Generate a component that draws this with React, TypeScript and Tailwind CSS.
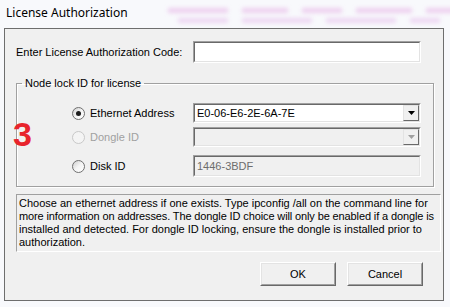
import React from "react";

function Radio({ checked, disabled }: { checked?: boolean; disabled?: boolean }) {
  return (
    <span
      className={
        disabled
          ? "w-[13px] h-[13px] shrink-0 rounded-full border border-[#c8c8c8] bg-[#f4f4f4] flex items-center justify-center"
          : "w-[13px] h-[13px] shrink-0 rounded-full border border-[#6f6f6f] bg-gradient-to-br from-[#cfcfcf] via-[#f4f4f4] to-white flex items-center justify-center"
      }
    >
      {checked && <span className="w-[5px] h-[5px] rounded-full bg-[#1c1c1c]" />}
    </span>
  );
}

function Sunken({
  children,
  className,
  inner,
}: {
  children?: React.ReactNode;
  className: string;
  inner: string;
}) {
  return (
    <div className={"border border-t-[#a0a0a0] border-l-[#a0a0a0] border-b-white border-r-white " + className}>
      <div className={"w-full h-full border border-t-[#696969] border-l-[#696969] border-b-[#e3e3e3] border-r-[#e3e3e3] flex items-center " + inner}>
        {children}
      </div>
    </div>
  );
}

function DropButton({ disabled }: { disabled?: boolean }) {
  return (
    <div className="ml-auto h-full w-[16px] bg-[#f0f0f0] border border-t-[#e3e3e3] border-l-[#e3e3e3] border-b-[#696969] border-r-[#696969] flex items-center justify-center">
      <svg width="7" height="4" viewBox="0 0 7 4">
        <path d="M0 0H7L3.5 4Z" fill={disabled ? "#a0a0a0" : "#000"} />
      </svg>
    </div>
  );
}

function Button({ label }: { label: string }) {
  return (
    <div className="w-[76px] h-[24px] border border-t-white border-l-white border-b-[#696969] border-r-[#696969]">
      <div className="w-full h-full border border-t-[#e3e3e3] border-l-[#e3e3e3] border-b-[#a0a0a0] border-r-[#a0a0a0] bg-[#f0f0f0] flex items-center justify-center">
        {label}
      </div>
    </div>
  );
}

export default function App() {
  return (
    <div className="w-[450px] h-[307px] overflow-hidden bg-[#f8f9fc] relative">
      <div className="h-[28px] flex items-start pl-[6px] pt-[5px] gap-[40px] overflow-hidden">
        <span className="font-['Noto_Sans',sans-serif] text-[12px] leading-[16px] text-black whitespace-nowrap">
          License Authorization
        </span>
        <div className="flex flex-col gap-[5px] pt-[3px] blur-[2px] opacity-60">
          <div className="flex gap-[14px]">
            <span className="w-[60px] h-[5px] bg-[#e6b3e6]" />
            <span className="w-[46px] h-[5px] bg-[#e6b3e6]" />
            <span className="w-[40px] h-[5px] bg-[#e6b3e6]" />
            <span className="w-[56px] h-[5px] bg-[#e6b3e6]" />
            <span className="w-[30px] h-[5px] bg-[#e6b3e6]" />
          </div>
          <div className="flex gap-[14px] pl-[10px]">
            <span className="w-[50px] h-[5px] bg-[#e6c0ec]" />
            <span className="w-[70px] h-[5px] bg-[#e6c0ec]" />
            <span className="w-[70px] h-[5px] bg-[#e6c0ec]" />
            <span className="w-[30px] h-[5px] bg-[#e6c0ec]" />
          </div>
        </div>
      </div>

      <div className="ml-[4px] w-[440px] h-[273px] border border-[#6e6e6e] bg-[#f0f0f0] flex flex-col font-['Liberation_Sans',Arial,sans-serif] text-[11px] leading-[13px] text-black relative">
        {/* Row 1 */}
        <div className="mt-[12px] pl-[11px] flex items-center">
          <span className="w-[177px]">Enter License Authorization Code:</span>
          <Sunken className="w-[228px] h-[22px]" inner="bg-white" />
        </div>

        {/* Group */}
        <fieldset className="mt-[14px] ml-[11px] w-[418px] border border-[#a0a0a0] shadow-[inset_1px_1px_0_#ffffff,1px_1px_0_#ffffff] pb-[9px]">
          <legend className="ml-[5px] px-[3px] leading-[13px]">Node lock ID for license</legend>
          <div className="mt-[13px] flex flex-col">
            <div className="flex items-center h-[20px]">
              <div className="ml-[55px] w-[121px] flex items-center gap-[5px]">
                <Radio checked />
                <span>Ethernet Address</span>
              </div>
              <Sunken className="w-[228px] h-[20px]" inner="bg-white">
                <span className="pl-[2px]">E0-06-E6-2E-6A-7E</span>
                <DropButton />
              </Sunken>
            </div>
            <div className="mt-[4px] flex items-center h-[20px]">
              <div className="ml-[55px] w-[121px] flex items-center gap-[5px]">
                <Radio disabled />
                <span className="text-[#a0a0a0]">Dongle ID</span>
              </div>
              <Sunken className="w-[228px] h-[20px]" inner="bg-[#f0f0f0]">
                <DropButton disabled />
              </Sunken>
            </div>
            <div className="mt-[8px] flex items-center h-[22px]">
              <div className="ml-[55px] w-[121px] flex items-center gap-[5px]">
                <Radio />
                <span>Disk ID</span>
              </div>
              <Sunken className="w-[228px] h-[22px]" inner="bg-[#f0f0f0]">
                <span className="pl-[2px] text-[#6d6d6d]">1446-3BDF</span>
              </Sunken>
            </div>
          </div>
        </fieldset>

        {/* Description */}
        <div className="mt-[7px] ml-[11px] w-[425px] h-[58px] border border-t-[#a0a0a0] border-l-[#a0a0a0] border-b-white border-r-white pl-[2px] pt-[2px] whitespace-nowrap overflow-hidden">
          Choose an ethernet address if one exists. Type ipconfig /all on the command line for
          <br />
          <span className="tracking-[-0.12px]">
            more information on addresses. The dongle ID choice will only be enabled if a dongle is
          </span>
          <br />
          installed and detected. For dongle ID locking, ensure the dongle is installed prior to
          <br />
          authorization.
        </div>

        {/* Buttons */}
        <div className="mt-[10px] mr-[20px] flex justify-end gap-[11px]">
          <Button label="OK" />
          <Button label="Cancel" />
        </div>

        <span className="absolute left-[8px] top-[88px] font-['Liberation_Sans',Arial,sans-serif] font-bold text-[34px] leading-[34px] text-[#e8242c]">
          3
        </span>
      </div>
    </div>
  );
}
